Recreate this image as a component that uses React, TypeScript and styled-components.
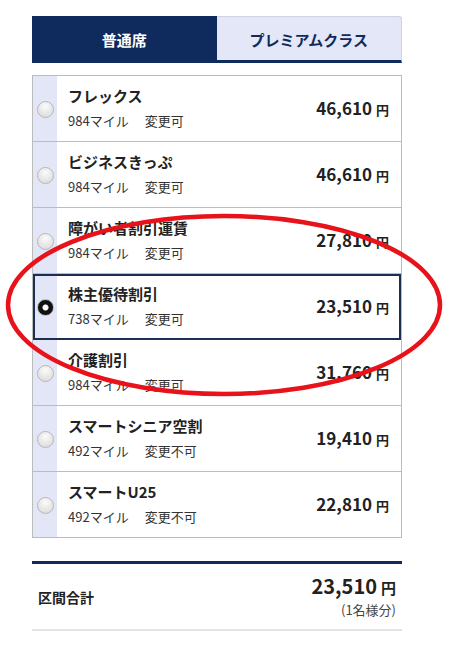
import styled, { createGlobalStyle } from "styled-components"

const GlobalStyle = createGlobalStyle`
  body {
    margin: 0;
    background: #fff;
    font-family: "Noto Sans CJK JP", "Noto Sans", sans-serif;
    color: #222;
  }
`

const Page = styled.div`
  position: relative;
  width: 370px;
  padding: 16px 0 0 32px;
`
const Tabs = styled.div`
  display: flex;
  height: 47px;
`
const Tab = styled.div<{ active?: boolean }>`
  flex: 1;
  display: flex;
  align-items: center;
  justify-content: center;
  font-size: 15px;
  font-weight: 700;
  box-sizing: border-box;
  background-color: ${(p) => (p.active ? "#0f2b5e" : "#e3e7f8")};
  color: ${(p) => (p.active ? "#fff" : "#0f2b5e")};
  border-bottom: ${(p) => (p.active ? "none" : "3px solid #0f2b5e")};
  border-top: ${(p) => (p.active ? "none" : "1px solid #cfd3e3")};
  border-right: ${(p) => (p.active ? "none" : "1px solid #cfd3e3")};
  border-top-right-radius: ${(p) => (p.active ? "0" : "3px")};
  padding-top: ${(p) => (p.active ? "0" : "1px")};
`
const FareList = styled.div`
  margin-top: 12px;
  border: 1px solid #bcbcbc;
  border-bottom: none;
`
const FareRow = styled.div<{ selected?: boolean }>`
  display: flex;
  height: 66px;
  box-sizing: border-box;
  border-bottom: 1px solid #bcbcbc;
  outline: ${(p) => (p.selected ? "2px solid #1b2f55" : "none")};
  outline-offset: -2px;
  position: relative;
`
const RadioCell = styled.div`
  width: 24px;
  background-color: #e2e6f7;
  display: flex;
  align-items: center;
  justify-content: center;
  padding-top: 2px;
`
const Radio = styled.div<{ checked?: boolean }>`
  width: 17px;
  height: 17px;
  border-radius: 50%;
  box-sizing: border-box;
  border: 1px solid #b8b8b8;
  background: ${(p) =>
    p.checked
      ? "radial-gradient(circle, #fff 0 2.5px, #111 3.5px)"
      : "radial-gradient(circle at 50% 30%, #fbfbfb, #d6d6d6)"};
`
const FareBody = styled.div`
  flex: 1;
  display: flex;
  align-items: center;
  justify-content: space-between;
  padding: 0 12px 0 11px;
`
const FareInfo = styled.div`
  display: flex;
  flex-direction: column;
  gap: 6px;
  padding-bottom: 1px;
`
const FareName = styled.div`
  font-size: 15px;
  font-weight: 700;
  color: #222;
  line-height: 20px;
`
const FareMeta = styled.div`
  font-size: 13px;
  color: #333;
  line-height: 18px;
  display: flex;
  gap: 16px;
`
const Price = styled.div<{ large?: boolean }>`
  font-size: ${(p) => (p.large ? "20px" : "17px")};
  font-weight: 700;
  color: #222;
  line-height: ${(p) => (p.large ? "24px" : "22px")};
`
const Yen = styled.span<{ large?: boolean }>`
  font-size: ${(p) => (p.large ? "15px" : "13px")};
  margin-left: 4px;
`
const Summary = styled.div`
  margin-top: 23px;
  border-top: 3px solid #0f2b5e;
  border-bottom: 2px solid #e4e4e4;
  height: 65px;
  display: flex;
  align-items: center;
  justify-content: space-between;
  padding: 0 6px 0 6px;
`
const SummaryLabel = styled.div`
  font-size: 14px;
  font-weight: 700;
  color: #222;
`
const SummaryTotal = styled.div`
  display: flex;
  flex-direction: column;
  align-items: flex-end;
  gap: 2px;
  padding-bottom: 2px;
`
const PerPerson = styled.div`
  font-size: 13px;
  color: #444;
  line-height: 16px;
`
const Highlight = styled.svg`
  position: absolute;
  left: 0;
  top: 0;
  pointer-events: none;
`

const fares = [
  { name: "フレックス", miles: 984, change: "変更可", price: "46,610" },
  { name: "ビジネスきっぷ", miles: 984, change: "変更可", price: "46,610" },
  { name: "障がい者割引運賃", miles: 984, change: "変更可", price: "27,810" },
  { name: "株主優待割引", miles: 738, change: "変更可", price: "23,510", selected: true },
  { name: "介護割引", miles: 984, change: "変更可", price: "31,760" },
  { name: "スマートシニア空割", miles: 492, change: "変更不可", price: "19,410" },
  { name: "スマートU25", miles: 492, change: "変更不可", price: "22,810" },
]

export default function App() {
  return (
    <>
      <GlobalStyle />
      <Page>
        <Tabs>
          <Tab active>普通席</Tab>
          <Tab>プレミアムクラス</Tab>
        </Tabs>
        <FareList>
          {fares.map((f) => (
            <FareRow key={f.name} selected={f.selected}>
              <RadioCell>
                <Radio checked={f.selected} />
              </RadioCell>
              <FareBody>
                <FareInfo>
                  <FareName>{f.name}</FareName>
                  <FareMeta>
                    <span>{f.miles}マイル</span>
                    <span>{f.change}</span>
                  </FareMeta>
                </FareInfo>
                <Price>
                  {f.price}
                  <Yen>円</Yen>
                </Price>
              </FareBody>
            </FareRow>
          ))}
        </FareList>
        <Summary>
          <SummaryLabel>区間合計</SummaryLabel>
          <SummaryTotal>
            <Price large>
              23,510
              <Yen large>円</Yen>
            </Price>
            <PerPerson>(1名様分)</PerPerson>
          </SummaryTotal>
        </Summary>
        <Highlight width="453" height="645" viewBox="0 0 453 645">
          <ellipse cx="224" cy="305" rx="216" ry="89" fill="none" stroke="#e8121b" strokeWidth="4.5" />
        </Highlight>
      </Page>
    </>
  )
}
